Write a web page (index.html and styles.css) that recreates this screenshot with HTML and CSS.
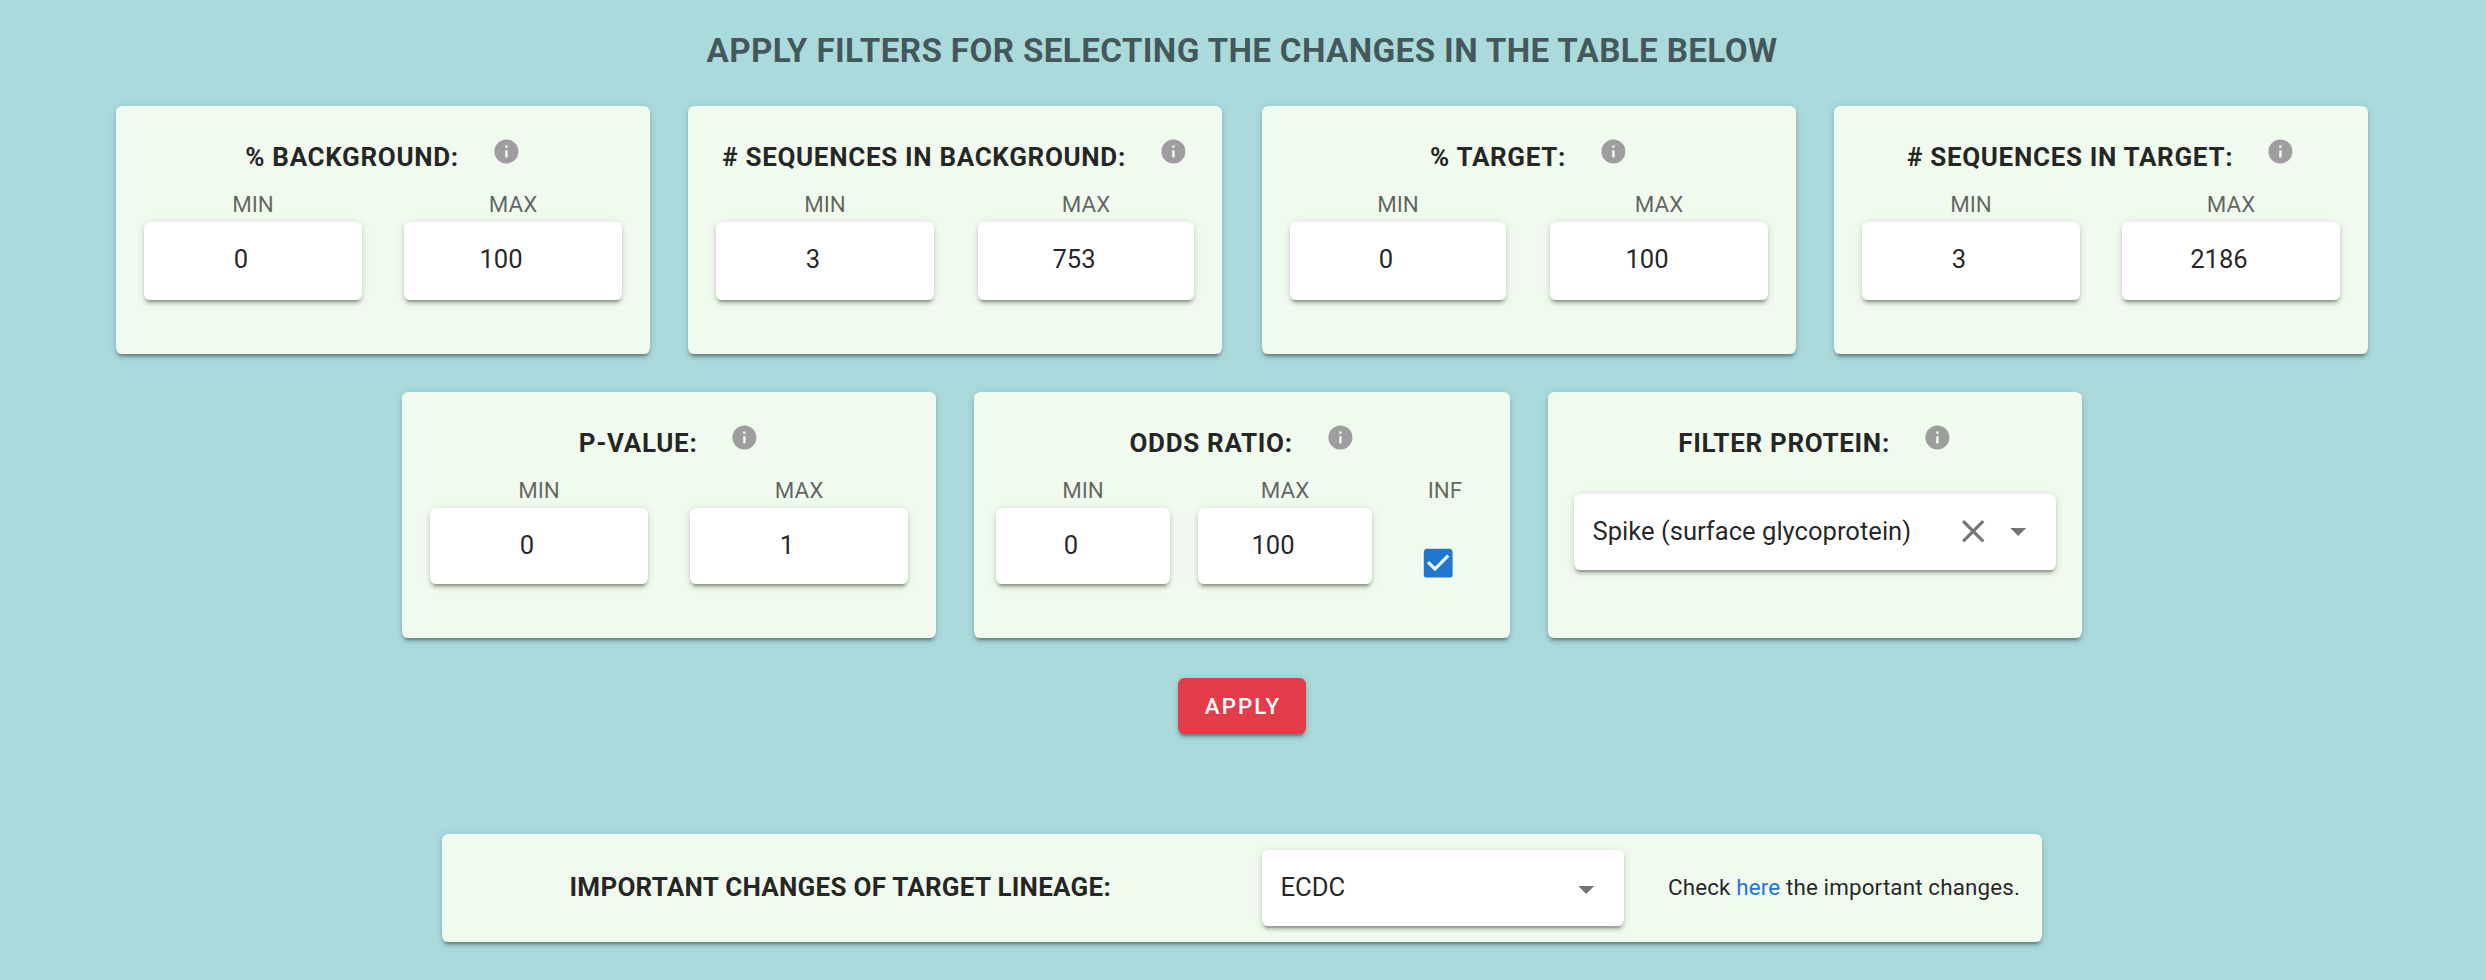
FILE: index.html
```html
<!DOCTYPE html>
<html lang="en">
<head>
<meta charset="utf-8">
<title>Filters</title>
<link rel="stylesheet" href="styles.css">
</head>
<body>
<svg class="sprite" aria-hidden="true">
  <symbol id="info" viewBox="0 0 24 24"><path d="M13,9H11V7H13M13,17H11V11H13M12,2A10,10 0 0,0 2,12A10,10 0 0,0 12,22A10,10 0 0,0 22,12A10,10 0 0,0 12,2Z"/></symbol>
  <symbol id="close" viewBox="0 0 24 24"><path d="M19,6.41L17.59,5L12,10.59L6.41,5L5,6.41L10.59,12L5,17.59L6.41,19L12,13.41L17.59,19L19,17.59L13.41,12L19,6.41Z"/></symbol>
  <symbol id="caret" viewBox="0 0 24 24"><path d="M7,10L12,15L17,10H7Z"/></symbol>
  <symbol id="checked" viewBox="0 0 24 24"><path d="M10,17L5,12L6.41,10.58L10,14.17L17.59,6.58L19,8M19,3H5C3.89,3 3,3.89 3,5V19A2,2 0 0,0 5,21H19A2,2 0 0,0 21,19V5C21,3.89 20.1,3 19,3Z"/></symbol>
</svg>
<main class="page">
  <h1 class="heading">APPLY FILTERS FOR SELECTING THE CHANGES IN THE TABLE BELOW</h1>

  <div class="row row-top">
    <section class="card">
      <div class="card-title"><h2>% BACKGROUND:</h2><svg class="info"><use href="#info"/></svg></div>
      <div class="fields">
        <div class="field"><span class="label">MIN</span><div class="box number">0</div></div>
        <div class="field"><span class="label">MAX</span><div class="box number">100</div></div>
      </div>
    </section>
    <section class="card">
      <div class="card-title"><h2># SEQUENCES IN BACKGROUND:</h2><svg class="info"><use href="#info"/></svg></div>
      <div class="fields narrow-last">
        <div class="field"><span class="label">MIN</span><div class="box number">3</div></div>
        <div class="field"><span class="label">MAX</span><div class="box number">753</div></div>
      </div>
    </section>
    <section class="card">
      <div class="card-title"><h2>% TARGET:</h2><svg class="info"><use href="#info"/></svg></div>
      <div class="fields narrow-first">
        <div class="field"><span class="label">MIN</span><div class="box number">0</div></div>
        <div class="field"><span class="label">MAX</span><div class="box number">100</div></div>
      </div>
    </section>
    <section class="card">
      <div class="card-title"><h2># SEQUENCES IN TARGET:</h2><svg class="info"><use href="#info"/></svg></div>
      <div class="fields">
        <div class="field"><span class="label">MIN</span><div class="box number">3</div></div>
        <div class="field"><span class="label">MAX</span><div class="box number">2186</div></div>
      </div>
    </section>
  </div>

  <div class="row row-bottom">
    <section class="card">
      <div class="card-title"><h2>P-VALUE:</h2><svg class="info"><use href="#info"/></svg></div>
      <div class="fields">
        <div class="field"><span class="label">MIN</span><div class="box number">0</div></div>
        <div class="field"><span class="label">MAX</span><div class="box number">1</div></div>
      </div>
    </section>
    <section class="card">
      <div class="card-title"><h2>ODDS RATIO:</h2><svg class="info"><use href="#info"/></svg></div>
      <div class="fields with-check">
        <div class="field"><span class="label">MIN</span><div class="box number">0</div></div>
        <div class="field"><span class="label">MAX</span><div class="box number">100</div></div>
        <div class="field check"><span class="label">INF</span><svg class="checkbox"><use href="#checked"/></svg></div>
      </div>
    </section>
    <section class="card">
      <div class="card-title"><h2>FILTER PROTEIN:</h2><svg class="info"><use href="#info"/></svg></div>
      <div class="box select protein"><span class="value">Spike (surface glycoprotein)</span><svg class="icon"><use href="#close"/></svg><svg class="icon"><use href="#caret"/></svg></div>
    </section>
  </div>

  <button class="apply" type="button">APPLY</button>

  <section class="card lineage">
    <h2 class="lineage-title">IMPORTANT CHANGES OF TARGET LINEAGE:</h2>
    <div class="box select source"><span class="value">ECDC</span><svg class="icon"><use href="#caret"/></svg></div>
    <p class="note">Check <a href="#">here</a> the important changes.</p>
  </section>
</main>
</body>
</html>
```
FILE: styles.css
```css
* { box-sizing: border-box; }

body {
  margin: 0;
  background: #aadadc;
  color: rgba(0, 0, 0, 0.87);
  font-family: Roboto, "Liberation Sans", sans-serif;
  font-size: 25.6px;
}

h1, h2, p { margin: 0; }

.sprite { display: none; }

svg { display: block; fill: currentColor; }

.page {
  display: flex;
  flex-direction: column;
  align-items: center;
  width: 2486px;
  height: 980px;
  overflow: hidden;
}

.heading {
  margin-top: 20px;
  margin-right: 2px;
  height: 86px;
  line-height: 61px;
  font-size: 33.28px;
  font-weight: 700;
  letter-spacing: 0.34px;
  color: rgba(0, 0, 0, 0.6);
  white-space: nowrap;
}

.row {
  display: flex;
  align-self: flex-start;
}

.row-top { padding-left: 116px; gap: 38px; }
.row-top .card { width: 534px; height: 248px; }
.row-top .card:nth-child(3) { margin-left: 2px; }
.row-top .box { height: 78px; }

.row-bottom { padding-left: 402px; gap: 38px; margin-top: 38px; }
.row-bottom .card { width: 534px; height: 246px; }
.row-bottom .card:nth-child(2) { width: 536px; }

.card {
  border-radius: 6.4px;
  background: #f0faee;
  padding: 31px 28px 0;
}

.card, .box, .apply {
  box-shadow: 0 4.8px 1.6px -3.2px rgba(0, 0, 0, 0.2),
    0 3.2px 3.2px 0 rgba(0, 0, 0, 0.14),
    0 1.6px 8px 0 rgba(0, 0, 0, 0.12);
}

.card-title {
  display: flex;
  justify-content: center;
  height: 49px;
}

h2 {
  line-height: 40px;
  font-size: 26px;
  font-weight: 700;
  letter-spacing: 0.68px;
  white-space: nowrap;
}

.info {
  width: 28.8px;
  height: 28.8px;
  margin-top: -0.4px;
  margin-left: 33px;
  color: #9e9e9e;
}

.fields {
  display: grid;
  grid-template-columns: 218px 218px;
  justify-content: space-between;
}
.fields.narrow-last { grid-template-columns: 218px 216px; }
.fields.narrow-first { grid-template-columns: 216px 218px; }
.fields.with-check {
  grid-template-columns: 174px 174px 68px;
  justify-content: start;
  column-gap: 28px;
  margin-left: -6px;
}

.field { text-align: center; }

.label {
  display: block;
  height: 36px;
  line-height: 36px;
  font-size: 22.4px;
  color: rgba(0, 0, 0, 0.6);
}

.box {
  height: 76px;
  border-radius: 6.4px;
  background: #fff;
  line-height: 74.5px;
}

.number { padding-right: 24px; }

.check { padding-left: 22px; }
.check .label { width: 46px; }

.checkbox {
  width: 38.4px;
  height: 38.4px;
  margin-top: 36.3px;
  margin-left: -3px;
  color: #2176d2;
}

.select {
  display: flex;
  align-items: center;
  padding-left: 18.5px;
  padding-bottom: 1.5px;
}
.select .value { flex: 1; white-space: nowrap; }

.icon {
  width: 38.4px;
  height: 38.4px;
  color: rgba(0, 0, 0, 0.54);
}

.protein {
  width: 482px;
  margin: 22px 0 0 -2px;
  padding-right: 19px;
}
.protein .icon + .icon { margin-left: 6px; }

.apply {
  width: 128px;
  height: 56px;
  margin-top: 40px;
  margin-right: 2px;
  padding: 0;
  border: 0;
  border-radius: 6.4px;
  background: #e53c4a;
  color: #fff;
  font-family: inherit;
  font-size: 22.4px;
  font-weight: 500;
  letter-spacing: 2px;
  text-indent: 2px;
  line-height: 56px;
}

.lineage {
  display: flex;
  align-items: center;
  align-self: flex-start;
  width: 1600px;
  height: 108px;
  margin: 100px 0 0 442px;
  padding: 0;
}
.lineage-title {
  width: 820px;
  padding-left: 127.5px;
  padding-bottom: 1.5px;
  letter-spacing: 0.26px;
}
.source { width: 362px; padding-right: 19px; }
.source .icon { margin-top: 4px; }
.note {
  margin-left: 44px;
  padding-bottom: 2px;
  font-size: 22.4px;
  letter-spacing: 0.14px;
  white-space: nowrap;
}
.note a { color: #2176d2; text-decoration: none; }
```
